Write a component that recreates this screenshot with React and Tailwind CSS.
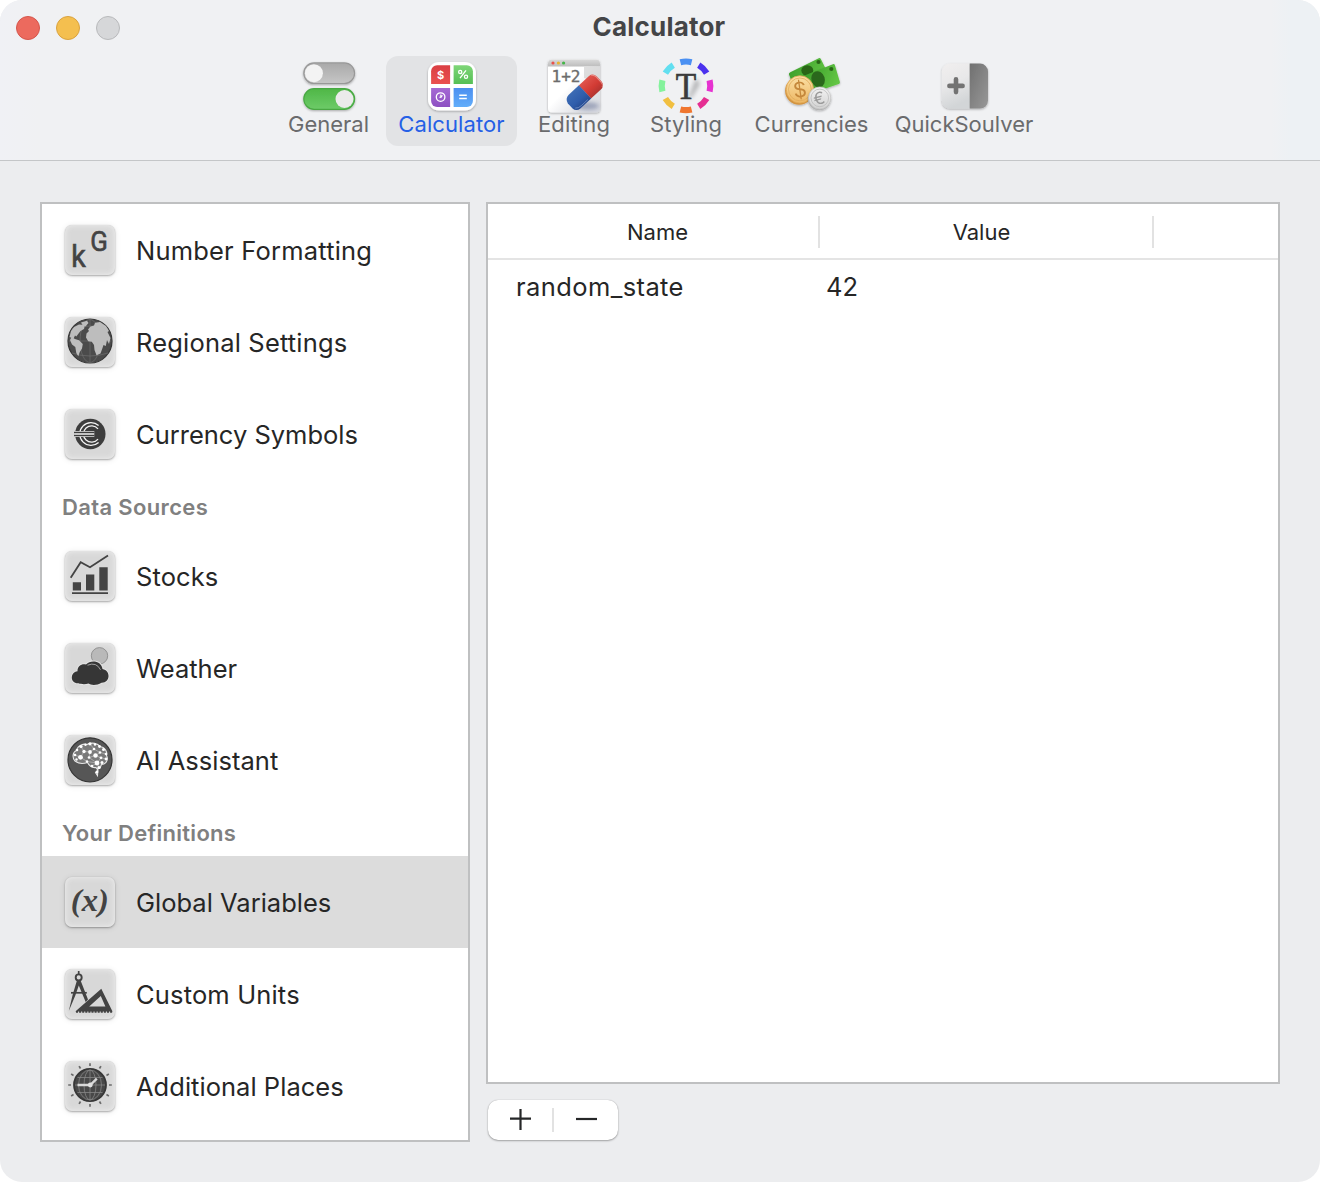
import React from "react";

function GeneralIcon() {
  return (
    <svg width="64" height="60" viewBox="0 0 64 60" className="block overflow-visible">
      <defs>
        <linearGradient id="offTrack" x1="0" y1="0" x2="0" y2="1">
          <stop offset="0" stopColor="#a9a9a9" />
          <stop offset="1" stopColor="#c6c6c6" />
        </linearGradient>
        <linearGradient id="onTrack" x1="0" y1="0" x2="0" y2="1">
          <stop offset="0" stopColor="#4fb747" />
          <stop offset="1" stopColor="#6dcb68" />
        </linearGradient>
        <filter id="soft" x="-30%" y="-30%" width="160%" height="170%">
          <feDropShadow dx="0" dy="1" stdDeviation="1" floodColor="#000" floodOpacity="0.3" />
        </filter>
      </defs>
      <g filter="url(#soft)">
        <rect x="6.8" y="6.9" width="50.8" height="20.6" rx="10.3" fill="url(#offTrack)" stroke="#989898" strokeWidth="1.2" />
        <rect x="6.8" y="32.7" width="50.8" height="20.6" rx="10.3" fill="url(#onTrack)" stroke="#48a843" strokeWidth="1.2" />
      </g>
      <circle cx="16.9" cy="17.2" r="9" fill="#f3f3f3" />
      <circle cx="47.5" cy="43" r="9" fill="#ebebeb" />
    </svg>
  );
}

function CalculatorIcon() {
  return (
    <svg width="64" height="60" viewBox="0 0 64 60" className="block overflow-visible">
      <defs>
        <linearGradient id="cRed" x1="0" y1="0" x2="0" y2="1"><stop offset="0" stopColor="#da3f43" /><stop offset="1" stopColor="#ea5050" /></linearGradient>
        <linearGradient id="cGreen" x1="0" y1="0" x2="0" y2="1"><stop offset="0" stopColor="#7fd678" /><stop offset="1" stopColor="#55bf55" /></linearGradient>
        <linearGradient id="cPurple" x1="0" y1="0" x2="0" y2="1"><stop offset="0" stopColor="#a569d4" /><stop offset="1" stopColor="#8d50c2" /></linearGradient>
        <linearGradient id="cBlue" x1="0" y1="0" x2="0" y2="1"><stop offset="0" stopColor="#4c8ff0" /><stop offset="1" stopColor="#62adfa" /></linearGradient>
      </defs>
      <rect x="8" y="6" width="48" height="48.4" rx="11" fill="#fff" filter="url(#soft)" />
      <g transform="translate(-.4 -.1)">
        <path d="M17.5 9.3H30.5V28.2H11.5V15.3A6 6 0 0 1 17.5 9.3Z" fill="url(#cRed)" />
        <path d="M34 9.3H47.3A6 6 0 0 1 53.3 15.3V28.2H34Z" fill="url(#cGreen)" />
        <path d="M11.5 32H30.5V51H17.5A6 6 0 0 1 11.5 45Z" fill="url(#cPurple)" />
        <path d="M34 32H53.3V45A6 6 0 0 1 47.3 51H34Z" fill="url(#cBlue)" />
        <text x="21" y="22.7" textAnchor="middle" fontSize="11" fontWeight="700" fill="#fff" fontFamily="Inter, sans-serif">$</text>
        <g stroke="#fff" fill="none" strokeWidth="1.3">
          <path d="M46.4 14.4L40.4 22.2" />
          <circle cx="40.6" cy="16" r="1.6" />
          <circle cx="46.4" cy="20.8" r="1.6" />
          <circle cx="21" cy="41.2" r="4.3" />
          <path d="M21.2 38.6V41.4H19.8M22.8 39.4L21 42" strokeWidth="1.1" />
          <path d="M39.6 39.4H47.2M39.6 42.6H47.2" strokeWidth="1.5" />
        </g>
      </g>
    </svg>
  );
}

function EditingIcon() {
  return (
    <svg width="64" height="60" viewBox="0 0 64 60" className="block overflow-visible">
      <defs>
        <linearGradient id="page" x1="0" y1="0" x2="1" y2="1">
          <stop offset="0.45" stopColor="#fff" />
          <stop offset="0.75" stopColor="#e2e3e7" />
          <stop offset="1" stopColor="#d5d7de" />
        </linearGradient>
        <linearGradient id="titleStrip" x1="0" y1="0" x2="0" y2="1">
          <stop offset="0" stopColor="#d9d9d9" />
          <stop offset="1" stopColor="#bcbcbc" />
        </linearGradient>
        <linearGradient id="eRed" x1="0" y1="0" x2="0" y2="1"><stop offset="0" stopColor="#e0544c" /><stop offset="0.6" stopColor="#d23b34" /><stop offset="1" stopColor="#b23430" /></linearGradient>
        <linearGradient id="eBlue" x1="0" y1="0" x2="0" y2="1"><stop offset="0" stopColor="#3c6bb4" /><stop offset="0.6" stopColor="#2f5dab" /><stop offset="1" stopColor="#264a90" /></linearGradient>
        <filter id="blur2" x="-40%" y="-40%" width="180%" height="180%"><feGaussianBlur stdDeviation="2" /></filter>
      </defs>
      <rect x="6" y="3.6" width="52" height="53" rx="4" fill="url(#page)" filter="url(#soft)" />
      <path d="M42 11H58V28L42 22Z" fill="#d3d3d3" opacity="0.75" />
      <path d="M6 10.6V7.6A4 4 0 0 1 10 3.6H54A4 4 0 0 1 58 7.6V10.6Z" fill="url(#titleStrip)" />
      <circle cx="11" cy="7" r="1.6" fill="#e9524c" />
      <circle cx="16.4" cy="7" r="1.6" fill="#eab52f" />
      <circle cx="21.6" cy="7" r="1.6" fill="#43b649" />
      <text x="9.5" y="26.3" textLength="29" lengthAdjust="spacingAndGlyphs" fontSize="15" stroke="#6c6c6c" strokeWidth="0.35" fill="#6c6c6c" fontFamily="'DejaVu Sans Mono', monospace">1+2</text>
      <ellipse cx="45" cy="50" rx="12" ry="4" fill="#5f6c92" opacity="0.5" filter="url(#blur2)" />
      <g transform="rotate(-43 42.6 36.3)">
        <path d="M43 27.3H57A6 6 0 0 1 62.3 32.8V40A5.5 5.5 0 0 1 56.8 45.3H43Z" fill="url(#eRed)" />
        <path d="M43.2 27.3H29A7 7 0 0 0 22.8 33V40A5.5 5.5 0 0 0 28 45.3H43.2Z" fill="url(#eBlue)" />
        <path d="M59 28.3Q61.6 30 61.6 33V40Q61.4 43.2 59 44.4" fill="none" stroke="#f0aaa4" strokeWidth="1" opacity="0.7" />
        <path d="M25 41.5Q27 43.8 31 43.8H40" fill="none" stroke="#9bb5e0" strokeWidth="0.8" opacity="0.6" />
      </g>
    </svg>
  );
}

const ringColors = ["#4a90f2", "#4b32ee", "#e632d0", "#e52f92", "#f0762f", "#f1bf40", "#84f29c", "#62dff0"];

function StylingIcon() {
  return (
    <svg width="64" height="60" viewBox="0 0 64 60" className="block overflow-visible">
      {ringColors.map((color, i) => (
        <path
          key={color}
          d="M26.4 5.6Q32 4.2 37.6 5.6"
          fill="none"
          stroke={color}
          strokeWidth="6.2"
          transform={`rotate(${i * 45} 32 29.8) translate(0 .6)`}
        />
      ))}
      <path d="M34 43L42 22L46 28L38 41Z" fill="#000" opacity="0.25" filter="url(#blur2)" />
      <text x="21.8" y="42.8" textLength="20.5" lengthAdjust="spacingAndGlyphs" fontSize="37.5" fill="#3b3b3b" stroke="#3b3b3b" strokeWidth="0.7" fontFamily="'Liberation Serif', serif">T</text>
    </svg>
  );
}

function CurrenciesIcon() {
  return (
    <svg width="64" height="60" viewBox="0 0 64 60" className="block overflow-visible">
      <defs>
        <linearGradient id="bill" x1="0" y1="0" x2="1" y2="0.4"><stop offset="0" stopColor="#389a27" /><stop offset="1" stopColor="#62c544" /></linearGradient>
        <linearGradient id="gold" x1="0" y1="0" x2="0" y2="1"><stop offset="0" stopColor="#fbe0a6" /><stop offset="1" stopColor="#edb865" /></linearGradient>
        <linearGradient id="silver" x1="0" y1="0" x2="0" y2="1"><stop offset="0" stopColor="#f3f3f3" /><stop offset="1" stopColor="#d2d2d2" /></linearGradient>
      </defs>
      <g transform="translate(-.7 0)">
        <g filter="url(#soft)">
          <path d="M9.7 18.5Q9.2 17 11 16.2L39.5 2.2Q40.8 1.8 41.5 3L50 20L15 32Z" fill="url(#bill)" />
          <ellipse cx="28" cy="14.5" rx="6" ry="5.2" fill="#296619" />
          <circle cx="39.2" cy="6" r="2.1" fill="#296619" />
        </g>
        <g filter="url(#soft)">
          <path d="M25.5 21Q25 19.4 27 18.8L53.6 8.2Q55.2 7.8 55.7 9.4L60.6 26Q61 27.5 59.4 28L30 38Z" fill="url(#bill)" />
          <ellipse cx="38.8" cy="23.3" rx="6.7" ry="8.2" fill="#2c681b" transform="rotate(-18 38.8 23.3)" />
          <circle cx="52" cy="13" r="2.1" fill="#296619" />
        </g>
        <g filter="url(#soft)">
          <circle cx="19.8" cy="34.8" r="14" fill="#d39440" />
          <circle cx="20.6" cy="33.4" r="13.6" fill="url(#gold)" stroke="#e2a955" strokeWidth="0.8" />
          <circle cx="20.6" cy="33.4" r="11.4" fill="none" stroke="#dfab5c" strokeWidth="0.8" />
          <text x="20.6" y="41" textAnchor="middle" fontSize="21" fill="#c4873a" fontFamily="Inter, sans-serif" transform="rotate(-8 21 33)">$</text>
        </g>
        <g filter="url(#soft)">
          <circle cx="40" cy="42.9" r="11.3" fill="#b2b2b2" />
          <circle cx="40.5" cy="41.9" r="11" fill="url(#silver)" stroke="#c4c4c4" strokeWidth="0.7" />
          <circle cx="40.5" cy="41.9" r="8.8" fill="none" stroke="#bdbdbd" strokeWidth="0.8" />
          <text x="39.8" y="48" textAnchor="middle" fontSize="17" fill="#9a9a9a" fontFamily="Inter, sans-serif" transform="rotate(-14 40.7 41.9)">€</text>
        </g>
      </g>
    </svg>
  );
}

function QuickIcon() {
  return (
    <svg width="64" height="60" viewBox="0 0 64 60" className="block overflow-visible">
      <defs>
        <linearGradient id="qLight" x1="0" y1="0" x2="0.3" y2="1"><stop offset="0" stopColor="#f1efef" /><stop offset="0.5" stopColor="#e8e8e9" /><stop offset="1" stopColor="#d2d5d7" /></linearGradient>
        <linearGradient id="qDark" x1="0" y1="0" x2="1" y2="1"><stop offset="0" stopColor="#707070" /><stop offset="1" stopColor="#989898" /></linearGradient>
      </defs>
      <g filter="url(#soft)">
        <path d="M37.7 7.6H17.9A8 8 0 0 0 9.9 15.6V44.5A8 8 0 0 0 17.9 52.5H37.7Z" fill="url(#qLight)" />
        <path d="M37.7 7.6H48A8 8 0 0 1 56 15.6V44.5A8 8 0 0 1 48 52.5H37.7Z" fill="url(#qDark)" />
      </g>
      <path d="M24 23.3V36.1M17.4 29.9H30.6" stroke="#737373" strokeWidth="4.6" strokeLinecap="round" />
    </svg>
  );
}

const INK = "#434343";

function Tile({ children }) {
  return (
    <div className="mx-[1px] -mt-[1px] h-[50px] w-[50px] shrink-0 rounded-[7px] bg-[#d8d8d8] shadow-[inset_0_0_5px_1px_#eaeaea,0_0_1px_rgba(0,0,0,0.12),0_1px_2px_rgba(0,0,0,0.28),0_1px_6px_rgba(0,0,0,0.1)]">
      <svg width="50" height="50" viewBox="1 1 50 50" className="block overflow-visible">
        {children}
      </svg>
    </div>
  );
}

function Formatting() {
  return (
    <Tile>
      <g fill={INK} stroke={INK} strokeWidth="0.6" fontFamily="Roboto, sans-serif" fontWeight="400">
        <text x="7.2" y="42.8" fontSize="30.5" textLength="14.6" lengthAdjust="spacingAndGlyphs">k</text>
        <text x="26.2" y="26.6" fontSize="28.5" textLength="17.6" lengthAdjust="spacingAndGlyphs">G</text>
      </g>
    </Tile>
  );
}

function Globe() {
  return (
    <Tile>
      <circle cx="26" cy="25" r="22" fill="#4b4b4b" stroke="#363636" strokeWidth="1.2" />
      <g fill="none" stroke="#6f6f6f" strokeWidth="0.7">
        <ellipse cx="26" cy="25" rx="10" ry="21.5" />
        <path d="M26 3.5V46.5M4.5 25H47.5M8 37Q26 43 44 37M8 13Q26 7 44 13" />
      </g>
      <g fill="#bdbdbd">
        <path d="M24 13.5L26.5 10.5L30 9.5L31 6.8L36 6L42 10L45 15L43.5 16L46.5 22L45 28L43 24L41.8 30L39.5 29L38.5 32L36.5 37.5L32.5 39.3L30.5 34L30 29L27.8 25.8L24.2 25.3L22 21.5L22.5 17.5L25 15Z" />
        <path d="M7.5 21L11 23L15 24.3L18.8 28L18 32.5L15.8 36L14.3 40.3L12.3 37L11.3 31L8 28.5L6 24Z" />
        <path d="M5.5 21L7 15L10 11L15 8.5L21 9L20 13L16.5 15L14 18.3L12.3 20.5L11 19.5L9.5 22.8Z" />
        <path d="M17 6.5L23 4.8L24.5 7L21.5 10.5L18.5 9Z" />
      </g>
    </Tile>
  );
}

function Euro() {
  return (
    <Tile>
      <circle cx="26.3" cy="26" r="15.2" fill="#3d3d3d" />
      <path d="M34.6 17.6A11.3 11.3 0 1 0 34.6 34.4" fill="none" stroke="#f2f2f2" strokeWidth="1.3" />
      <path d="M34 20.8A8.2 8.2 0 1 0 34 31.2" fill="none" stroke="#f2f2f2" strokeWidth="1.3" />
      <path d="M10.5 26H30.3" stroke="#f2f2f2" strokeWidth="5.8" />
      <path d="M10 24.6H30.5M10 27.5H30.5" stroke="#3d3d3d" strokeWidth="1.5" />
    </Tile>
  );
}

function Stocks() {
  return (
    <Tile>
      <path d="M6.7 27.7L16.7 12.3L26 17.2L44 5.5" fill="none" stroke={INK} strokeWidth="1.8" />
      <path d="M8.8 32.2H17V40.6H8.8ZM22 24.4H30.3V40.6H22ZM35.3 17.3H43.7V40.6H35.3ZM8 42.3H44V44H8Z" fill={INK} />
    </Tile>
  );
}

function Weather() {
  return (
    <Tile>
      <circle cx="35.5" cy="13.8" r="8.2" fill="#b9b9b9" stroke="#8c8c8c" strokeWidth="0.9" />
      <path d="M14.5 41.3C6 41.8 5.6 30.5 13.5 29.3C13.2 23.6 18.5 21.3 22 22.6C26.5 17.3 37.5 18.5 38.5 27C47 28.5 46.5 41 37.5 40.7C33 43.6 27 43.3 24.5 41.6C21 42.6 17 42.3 14.5 41.3Z" fill="#363636" stroke="#e5e5e5" strokeWidth="1.8" paintOrder="stroke" />
      <path d="M23.5 23.2Q32.5 19.6 36.5 27.8" fill="none" stroke="#bbb" strokeWidth="0.8" />
    </Tile>
  );
}

const neurons = [
  [11, 21, 1.3], [13, 16, 1.3], [17, 12.5, 1.6], [21.5, 10.8, 1.2], [26, 9.8, 1.6], [31, 10.5, 1.2], [35.5, 12.5, 1.4], [39.5, 15.5, 1.5],
  [42, 20, 1.3], [42, 25, 1.4], [38, 28.5, 1.5], [33, 29, 2.4], [28, 32, 1.3], [23, 27.5, 1.2], [16.5, 23.3, 2.4], [12.5, 25.5, 1.2],
  [20, 17.5, 1.7], [26, 18, 1.9], [31.5, 21.5, 2.2], [36, 18.5, 1.3], [30, 15, 1.3], [25, 23.5, 1.3], [37, 23.8, 1.4], [35, 33.5, 1.6], [33, 38, 1.4],
];

function Brain() {
  return (
    <Tile>
      <circle cx="26" cy="25.8" r="22" fill="#565656" stroke="#363636" strokeWidth="1.2" />
      <path d="M11 27C8 24 8.5 18 12.5 16.5C14 11 20 9.5 23 10.5C28 7.8 34 9.5 36 12.5C41 13 43.5 18 42.5 21.5C45 26 41.5 30.5 37.5 30.5L36 34L34 34.5L33.5 41.5L31.5 38.5L34 36.5L32 33.5C28 34 25 31.5 23.5 28.5C19 30 14 29.5 11 27Z" fill="#7a7a7a" stroke="#e6e6e6" strokeWidth="1.1" />
      <path d="M11 21L16.5 23.3L20 17.5L26 18L30 15L36 18.5L42 20M17 12.5L20 17.5M26 9.8L30 15M26 18L25 23.5L31.5 21.5L36 18.5M31.5 21.5L37 23.8L42 25M25 23.5L33 29L37 23.8M16.5 23.3L23 27.5L33 29L35 33.5M28 32L33 29" fill="none" stroke="#c8c8c8" strokeWidth="0.6" />
      {neurons.map(([x, y, r], i) => (
        <circle key={i} cx={x} cy={y} r={r} fill="#fff" />
      ))}
    </Tile>
  );
}

function Variables() {
  return (
    <Tile>
      <text x="25.8" y="35" textAnchor="middle" fontSize="31" textLength="38" lengthAdjust="spacingAndGlyphs" fontStyle="italic" fontWeight="700" fill={INK} fontFamily="'Liberation Serif', serif">(x)</text>
    </Tile>
  );
}

function Units() {
  return (
    <Tile>
      <circle cx="14.7" cy="9.4" r="3" fill="none" stroke={INK} strokeWidth="1.9" />
      <path d="M14.7 3V6" stroke={INK} strokeWidth="1.7" />
      <path d="M13 12.3H16.5L24 31.5L21.7 34L14.8 17.5L11.3 27.5L4.8 43L8.6 27Z" fill={INK} />
      <path d="M7 24.8H22.8" stroke={INK} strokeWidth="1.7" />
      <path d="M37.3 20.7L48.5 43.4H11.3ZM36.8 27.9L25.2 38.4H41.4Z" fillRule="evenodd" fill={INK} />
      <path d="M12 43.9H48.5" stroke={INK} strokeWidth="1.6" strokeDasharray="2 1.1" />
    </Tile>
  );
}

const hours = [0, 1, 2, 3, 4, 5, 6, 7, 8, 9, 10, 11];

function Places() {
  return (
    <Tile>
      {hours.map((h) => (
        <path key={h} d="M26 3.2V6" stroke="#6b6b6b" strokeWidth="1.7" transform={`rotate(${h * 30} 26 25)`} />
      ))}
      <circle cx="26" cy="25" r="16" fill="#484848" stroke="#373737" strokeWidth="1.8" />
      <g fill="none" stroke="#868686" strokeWidth="0.8">
        <ellipse cx="26" cy="25" rx="6" ry="15" />
        <ellipse cx="26" cy="25" rx="11.5" ry="15" />
        <path d="M26 10V40M11 25H41M13.5 17.5H38.5M13.5 32.5H38.5" />
      </g>
      <path d="M13.5 25H26.3L32.8 18.7" fill="none" stroke="#d8d8d8" strokeWidth="2.4" />
      <circle cx="26.3" cy="25" r="2.4" fill="#e0e0e0" />
    </Tile>
  );
}

function Tool({ box, label, text, children }) {
  return (
    <button className={`flex h-[90px] flex-col items-center rounded-[12px] ${box}`}>
      {children}
      <span className={`-mt-[7px] text-[22px] leading-[30px] whitespace-nowrap ${text}`}>{label}</span>
    </button>
  );
}

function Item({ icon, label, spacing, selected }) {
  return (
    <div className={`flex h-[92px] items-center gap-[20px] pl-[22px] ${selected ? "bg-[#dcdcdc]" : ""}`}>
      {icon}
      <span className={`mt-[2px] text-[25.5px] whitespace-nowrap text-[#262626] ${spacing}`}>{label}</span>
    </div>
  );
}

function Section({ label, spacing }) {
  return (
    <div className={`flex h-[50px] items-center pt-[4px] pl-[20px] text-[22px] font-semibold whitespace-nowrap text-[#808080] ${spacing}`}>
      {label}
    </div>
  );
}

export default function App() {
  return (
    <div className="h-[1182px] w-[1320px] bg-white font-['Inter',sans-serif]">
      <div className="flex h-full w-full flex-col overflow-hidden rounded-[22px] bg-[#ecedef]">
        <header className="flex h-[161px] shrink-0 flex-col border-b border-[#c4c6c8] bg-[linear-gradient(90deg,#f0f1f5_0,#f0f1f3_40px,#f0f1f3_1270px,#edf1f4_1290px)]">
          <div className="grid h-[56px] grid-cols-[1fr_auto_1fr] items-center">
            <div className="flex gap-[16px] pl-[16px]">
              <span className="size-[24px] rounded-full border border-[#d4564c] bg-[#ec6a5e]" />
              <span className="size-[24px] rounded-full border border-[#d9a23f] bg-[#f4bf4f]" />
              <span className="size-[24px] rounded-full border border-[#b8b9bb] bg-[#d6d7d9]" />
            </div>
            <h1 className="-mt-[2px] -ml-[2px] text-[26px] leading-[32px] font-bold tracking-[0.2px] text-[#444547]">Calculator</h1>
            <span />
          </div>
          <nav className="flex pl-[276px] text-[#6a6b6d]">
            <Tool box="w-[105px]" label="General" text=""><GeneralIcon /></Tool>
            <Tool box="ml-[5px] w-[131px] bg-[#e2e3e5]" label="Calculator" text="tracking-[0.1px] text-[#2560e6]"><CalculatorIcon /></Tool>
            <Tool box="ml-[9px] w-[96px]" label="Editing" text="tracking-[0.15px]"><EditingIcon /></Tool>
            <Tool box="ml-[16px] w-[96px]" label="Styling" text="tracking-[0.1px]"><StylingIcon /></Tool>
            <Tool box="ml-[9px] w-[137px]" label="Currencies" text=""><CurrenciesIcon /></Tool>
            <Tool box="ml-[3px] w-[162px]" label="QuickSoulver" text=""><QuickIcon /></Tool>
          </nav>
        </header>
        <main className="flex gap-[16px] px-[40px] pt-[41px]">
          <aside className="h-[940px] w-[430px] border-2 border-[#bfc0c1] bg-white">
            <Item icon={<Formatting />} label="Number Formatting" spacing="tracking-[0.2px]" />
            <Item icon={<Globe />} label="Regional Settings" spacing="tracking-[0.18px]" />
            <Item icon={<Euro />} label="Currency Symbols" spacing="" />
            <Section label="Data Sources" spacing="tracking-[0.35px]" />
            <Item icon={<Stocks />} label="Stocks" spacing="tracking-[0.1px]" />
            <Item icon={<Weather />} label="Weather" spacing="" />
            <Item icon={<Brain />} label="AI Assistant" spacing="tracking-[0.03px]" />
            <Section label="Your Definitions" spacing="tracking-[0.28px]" />
            <Item icon={<Variables />} label="Global Variables" spacing="" selected />
            <Item icon={<Units />} label="Custom Units" spacing="tracking-[0.16px]" />
            <Item icon={<Places />} label="Additional Places" spacing="tracking-[0.03px]" />
          </aside>
          <section className="flex w-[794px] flex-col gap-[16px]">
            <div className="h-[882px] border-2 border-[#bfc0c1] bg-white text-[#262626]">
              <div className="flex h-[56px] items-center border-b-2 border-[#e4e4e4] text-[22px]">
                <span className="w-[330px] pt-[2px] pl-[9px] text-center">Name</span>
                <span className="mt-[2px] h-[32px] w-[2px] bg-[#e2e2e2]" />
                <span className="w-[332px] pt-[2px] pr-[9px] text-center">Value</span>
                <span className="mt-[2px] h-[32px] w-[2px] bg-[#e2e2e2]" />
              </div>
              <div className="flex h-[54px] items-center pl-[28px] text-[25.5px]">
                <span className="w-[310px] tracking-[0.4px]">random_state</span>
                <span>42</span>
              </div>
            </div>
            <div className="ml-[2px] flex h-[40px] w-[130px] items-center rounded-[10px] bg-white shadow-[0_0_1px_rgba(0,0,0,0.3),0_1px_2px_rgba(0,0,0,0.3)]">
              <button className="flex w-[64px] justify-center">
                <svg width="22" height="22" viewBox="0 0 22 22"><path d="M11.5 -.1V20.9M1 9.6H22" stroke="#262728" strokeWidth="2.2" /></svg>
              </button>
              <span className="h-[24px] w-[2px] bg-[#e2e2e2]" />
              <button className="flex w-[64px] justify-center">
                <svg width="22" height="22" viewBox="0 0 22 22"><path d="M1 10H22" stroke="#262728" strokeWidth="2.2" /></svg>
              </button>
            </div>
          </section>
        </main>
      </div>
    </div>
  );
}
